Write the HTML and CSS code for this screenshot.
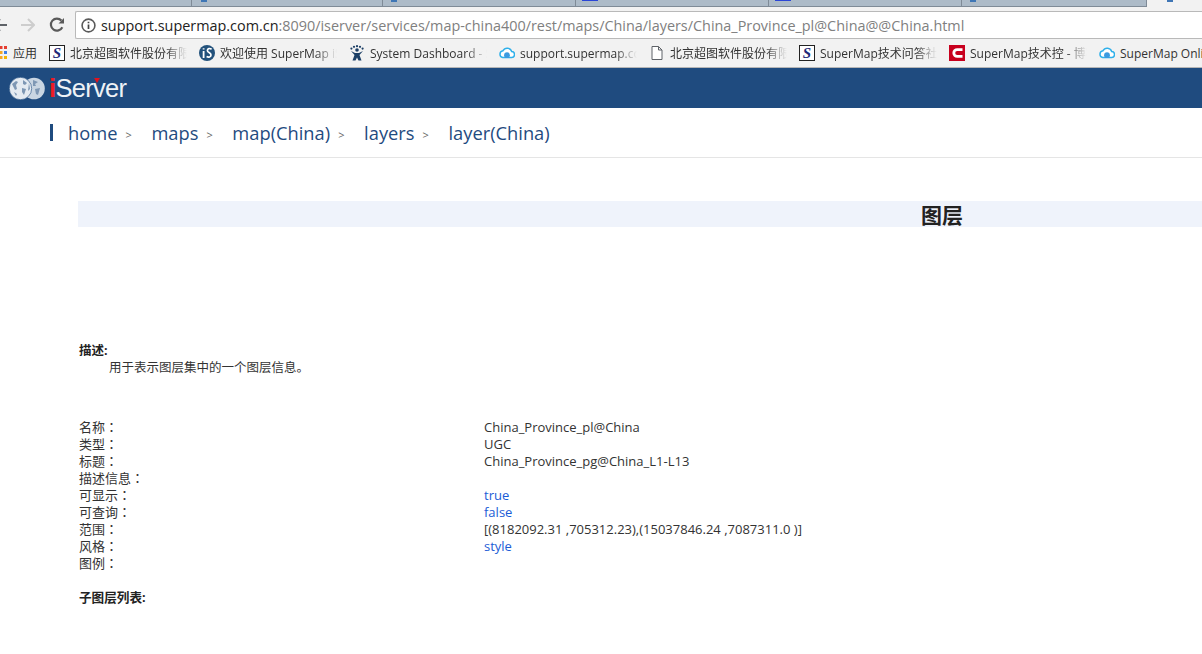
FILE: index.html
```html
<!DOCTYPE html>
<html lang="zh-CN">
<head>
<meta charset="utf-8">
<title>图层</title>
<link rel="stylesheet" href="styles.css">
</head>
<body>
<div class="tabstrip">
  <div class="tab tab-first"></div>
  <div class="tab tab-second"><i class="fav"></i></div>
  <div class="tab"><i class="fav"></i></div>
  <div class="tab"><i class="fav fav-square"></i></div>
  <div class="tab"><i class="fav fav-square"></i></div>
  <div class="tab tab-last"><i class="fav"></i></div>
  <div class="tab-active"><i class="fav"></i></div>
</div>
<div class="toolbar">
  <svg class="nav nav-back" width="8" height="14" viewBox="0 0 8 14"><path d="M-6 7H7M0 1L-6 7L0 13" fill="none" stroke="#5f6368" stroke-width="2"/></svg>
  <svg class="nav nav-forward" width="14" height="14" viewBox="0 0 14 14"><path d="M0 7H13M7 1L13 7L7 13" fill="none" stroke="#cdcdcd" stroke-width="2"/></svg>
  <svg class="nav nav-reload" width="16" height="16" viewBox="0 0 16 16"><path d="M13.3 10.2A6 6 0 1 1 12.4 3.6" fill="none" stroke="#5a5a5a" stroke-width="2.2"/><path d="M9.5 6.6H15V1z" fill="#5a5a5a"/></svg>
  <div class="omnibox">
    <svg class="info" width="15" height="15" viewBox="0 0 15 15"><circle cx="7.5" cy="7.5" r="6.4" fill="none" stroke="#5a5a5a" stroke-width="1.6"/><path d="M7.5 6.5V11M7.5 3.8V5.2" stroke="#444" stroke-width="1.7"/></svg>
    <span class="url"><span class="host">support.supermap.com.cn</span>:8090/iserver/services/map-china400/rest/maps/China/layers/China_Province_pl@China@@China.html</span>
  </div>
</div>
<div class="bookmarks">
  <div class="apps">
    <svg class="apps-icon" width="7" height="14" viewBox="0 0 7 14">
      <rect x="0" y="0" width="2.5" height="3" fill="#e53e30"/><rect x="4" y="0" width="3" height="3" fill="#e53e30"/>
      <rect x="0" y="5" width="2.5" height="3" fill="#f5a623"/><rect x="4" y="5" width="3" height="3" fill="#3d7fe6"/>
      <rect x="0" y="10" width="2.5" height="3" fill="#f5a623"/><rect x="4" y="10" width="3" height="3" fill="#f5b400"/>
    </svg>
    <span class="apps-label">应用</span>
  </div>
  <div class="bm">
    <svg class="bm-icon" width="16" height="16" viewBox="0 0 16 16"><rect x=".5" y=".5" width="15" height="15" fill="#fff" stroke="#222"/><text class="s-glyph" x="8" y="13" text-anchor="middle">S</text></svg>
    <span class="bm-text">北京超图软件股份有限公司</span>
  </div>
  <div class="bm">
    <svg class="bm-icon" width="16" height="16" viewBox="0 0 16 16"><circle cx="8" cy="8" r="8" fill="#23527c"/><path d="M4.6 6V13M4.6 3.2V4.6" stroke="#fff" stroke-width="1.8"/><path d="M12.6 4.2C10.8 3 8.4 3.4 8.4 5.4C8.4 7.6 12 7.4 12 10C12 12.2 9.4 12.6 7.6 11.6" fill="none" stroke="#fff" stroke-width="1.7"/></svg>
    <span class="bm-text">欢迎使用 SuperMap iServer</span>
  </div>
  <div class="bm">
    <svg class="bm-icon" width="16" height="16" viewBox="0 0 16 16"><circle cx="2.4" cy="3.6" r="1.1" fill="#1c3f66"/><circle cx="5" cy="1.8" r="1.1" fill="#1c3f66"/><circle cx="8" cy="1.2" r="1.1" fill="#1c3f66"/><circle cx="11" cy="1.8" r="1.1" fill="#1c3f66"/><circle cx="13.6" cy="3.6" r="1.1" fill="#1c3f66"/><circle cx="8" cy="5" r="1.8" fill="#1c3f66"/><path d="M2 6L6 8H10L14 6L10.5 10L12.5 15.5H9.5L8 12.5L6.5 15.5H3.5L5.5 10z" fill="#1c3f66"/></svg>
    <span class="bm-text">System Dashboard - SuperMap</span>
  </div>
  <div class="bm">
    <svg class="bm-icon" width="16" height="16" viewBox="0 0 16 16"><path d="M3.8 12.6H12.3A3 3 0 0 0 12.7 6.6A4.7 4.7 0 0 0 4 5.7A3.5 3.5 0 0 0 3.8 12.6z" fill="#fff" stroke="#2fb0ea" stroke-width="1.5"/><circle cx="8" cy="10.2" r="2.9" fill="#3c9be0"/></svg>
    <span class="bm-text">support.supermap.com.cn</span>
  </div>
  <div class="bm">
    <svg class="bm-icon" width="16" height="16" viewBox="0 0 16 16"><path d="M3 1.5H9.5L13 5V14.5H3zM9.5 1.5V5H13" fill="#fff" stroke="#5f6368" stroke-width="1"/></svg>
    <span class="bm-text">北京超图软件股份有限公司</span>
  </div>
  <div class="bm">
    <svg class="bm-icon" width="16" height="16" viewBox="0 0 16 16"><rect x=".5" y=".5" width="15" height="15" fill="#fff" stroke="#222"/><text class="s-glyph" x="8" y="13" text-anchor="middle">S</text></svg>
    <span class="bm-text">SuperMap技术问答社区</span>
  </div>
  <div class="bm">
    <svg class="bm-icon" width="16" height="16" viewBox="0 0 16 16"><rect width="16" height="16" fill="#c8001e"/><path d="M13.5 4.6H8.2A3.4 3.4 0 0 0 8.2 11.4H13.5" fill="none" stroke="#fff" stroke-width="2.8"/></svg>
    <span class="bm-text">SuperMap技术控 - 博客园</span>
  </div>
  <div class="bm">
    <svg class="bm-icon" width="16" height="16" viewBox="0 0 16 16"><path d="M3.8 12.6H12.3A3 3 0 0 0 12.7 6.6A4.7 4.7 0 0 0 4 5.7A3.5 3.5 0 0 0 3.8 12.6z" fill="#fff" stroke="#2fb0ea" stroke-width="1.5"/><circle cx="8" cy="10.2" r="2.9" fill="#3c9be0"/></svg>
    <span class="bm-text bm-text-open">SuperMap Online</span>
  </div>
</div>
<header class="banner">
  <svg class="globe" width="36" height="23" viewBox="0 0 36 23">
    <circle cx="25" cy="11.5" r="10.8" fill="#c9d5e2"/>
    <circle cx="11.5" cy="11.5" r="11.2" fill="#e4eaf1"/>
    <circle cx="11.5" cy="11.5" r="11.2" fill="none" stroke="#1f4b7f" stroke-width=".6"/>
    <path d="M3 7L7 4L9 5L7 8L8 12L6 13zM14 3L18 6L16 8L14 7zM13 11L17 12L15 18L13 15zM5 15L8 17L7 19zM24 3L29 5L26 7L27 9L24 9zM26 12L31 11L29 18L27 17zM20 6L21 12L19 14z" fill="#7e97b4"/>
  </svg>
  <span class="brand"><span class="brand-i">i</span>Server</span>
</header>
<nav class="crumbs">
  <a class="crumb">home</a><span class="sep">&gt;</span>
  <a class="crumb">maps</a><span class="sep">&gt;</span>
  <a class="crumb">map(China)</a><span class="sep">&gt;</span>
  <a class="crumb">layers</a><span class="sep">&gt;</span>
  <a class="crumb">layer(China)</a>
</nav>
<main class="content">
  <h1 class="title">图层</h1>
  <section class="desc">
    <b class="desc-head">描述:</b>
    <p class="desc-body">用于表示图层集中的一个图层信息。</p>
  </section>
  <dl class="props">
    <dt>名称<span class="colon" lang="zh-TW">：</span></dt><dd>China_Province_pl@China</dd>
    <dt>类型<span class="colon" lang="zh-TW">：</span></dt><dd>UGC</dd>
    <dt>标题<span class="colon" lang="zh-TW">：</span></dt><dd>China_Province_pg@China_L1-L13</dd>
    <dt>描述信息<span class="colon" lang="zh-TW">：</span></dt><dd></dd>
    <dt>可显示<span class="colon" lang="zh-TW">：</span></dt><dd class="link">true</dd>
    <dt>可查询<span class="colon" lang="zh-TW">：</span></dt><dd class="link">false</dd>
    <dt>范围<span class="colon" lang="zh-TW">：</span></dt><dd>[(8182092.31 ,705312.23),(15037846.24 ,7087311.0 )]</dd>
    <dt>风格<span class="colon" lang="zh-TW">：</span></dt><dd class="link">style</dd>
    <dt>图例<span class="colon" lang="zh-TW">：</span></dt><dd></dd>
  </dl>
  <b class="sublist">子图层列表:</b>
</main>
</body>
</html>
```
FILE: styles.css
```css
* { box-sizing: border-box; }
html, body { margin: 0; padding: 0; height: 100%; overflow: hidden; }
body {
  width: 1202px;
  background: #fff;
  color: #333;
  font-family: "Open Sans", "Noto Sans CJK SC", sans-serif;
  font-size: 13px;
}

/* browser chrome */
.tabstrip {
  display: flex;
  height: 7px;
  background: #adbbc8;
  overflow: hidden;
}
.tab {
  width: 193px;
  border-right: 1px solid #7f8b97;
  border-bottom: 1px solid #7f8b97;
  padding-left: 6px;
}
.tab-first { width: 192px; }
.tab-second { width: 191px; padding-left: 7px; }
.tab-last { width: 185px; }
.tab-active { flex: 1; background: #f2f2f2; padding-left: 18px; }
.fav { display: block; width: 6px; height: 2px; background: #3f76b5; margin-left: 2px; }
.fav-square { width: 16px; height: 1px; background: #2b46d6; margin-left: 0; }

.toolbar {
  display: flex;
  align-items: center;
  height: 32px;
  padding-top: 4px;
  background: #f2f2f2;
}
.nav { flex: none; display: block; }
.nav-back { margin-right: 13px; }
.nav-forward { margin-right: 14px; }
.nav-reload { margin-right: 10px; }
.omnibox {
  flex: 1;
  display: flex;
  align-items: center;
  height: 28px;
  padding-left: 5px;
  background: #fff;
  border: 1px solid #b9b9b9;
  border-right: 0;
  border-radius: 2px 0 0 2px;
}
.info { flex: none; margin-right: 5px; }
.url { font-size: 14.4px; color: #808080; white-space: nowrap; }
.host { color: #222; }

.bookmarks {
  display: flex;
  align-items: center;
  height: 29px;
  background: #f2f2f2;
  border-bottom: 1px solid #b6b6b6;
  font-size: 12px;
  color: #333;
  overflow: hidden;
}
.apps { flex: none; width: 49px; display: flex; align-items: center; gap: 6px; }
.apps-label { white-space: nowrap; }
.bm { flex: none; width: 150px; display: flex; align-items: center; gap: 5px; }
.bm-icon { flex: none; }
.s-glyph {
  font-family: "Liberation Serif", serif;
  font-size: 15px;
  font-weight: 700;
  font-style: italic;
  fill: #1f2a78;
}
.bm-text {
  width: 117px;
  white-space: nowrap;
  overflow: hidden;
  -webkit-mask-image: linear-gradient(to right, #000 82%, transparent 100%);
  mask-image: linear-gradient(to right, #000 82%, transparent 100%);
}
.bm-text-open { -webkit-mask-image: none; mask-image: none; }

/* page header */
.banner {
  display: flex;
  align-items: center;
  gap: 4px;
  height: 40px;
  padding-left: 9px;
  background: #1f4b7f;
}
.globe { flex: none; }
.brand {
  position: relative;
  font-family: "Liberation Sans", sans-serif;
  font-size: 25.5px;
  letter-spacing: -0.7px;
  color: #eef2f6;
}
.brand::after {
  content: "";
  position: absolute;
  left: 45px;
  top: 4px;
  border-left: 3px solid transparent;
  border-right: 3px solid transparent;
  border-top: 5px solid #e0141e;
}
.brand-i { color: #ee1c25; font-weight: 700; }

.crumbs {
  display: flex;
  align-items: center;
  height: 50px;
  padding-left: 50px;
  border-bottom: 1px solid #e5e5e5;
  color: #1f4b7f;
  font-size: 18.3px;
  white-space: nowrap;
}
.crumbs::before {
  content: "";
  width: 3px;
  height: 17px;
  margin-right: 15px;
  background: #1f4b7f;
}
.sep { font-size: 11px; color: #666; margin: 3px 19.7px 0 8px; }

.content { padding: 43px 0 0 78px; }
.title {
  margin: 0;
  height: 26px;
  padding-left: 843px;
  background: #eff3fb;
  font-size: 21px;
  line-height: 29px;
  font-weight: 700;
  color: #222;
}
.desc { margin: 115px 0 0 1px; line-height: 17px; font-size: 12.5px; }
.desc-head { display: block; font-weight: 700; color: #222; }
.desc-body { margin: 0 0 0 30px; }
.props {
  display: grid;
  grid-template-columns: 405px 1fr;
  grid-auto-rows: 17px;
  margin: 43px 0 0 1px;
  line-height: 17px;
}
.props dt, .props dd { margin: 0; white-space: nowrap; }
.props dt { line-height: 15px; }
.colon { font-family: "Noto Sans CJK TC", sans-serif; }
.link { color: #1a5cd6; }
.sublist { display: block; margin: 17px 0 0 1px; line-height: 17px; font-size: 12.6px; color: #222; }
```
